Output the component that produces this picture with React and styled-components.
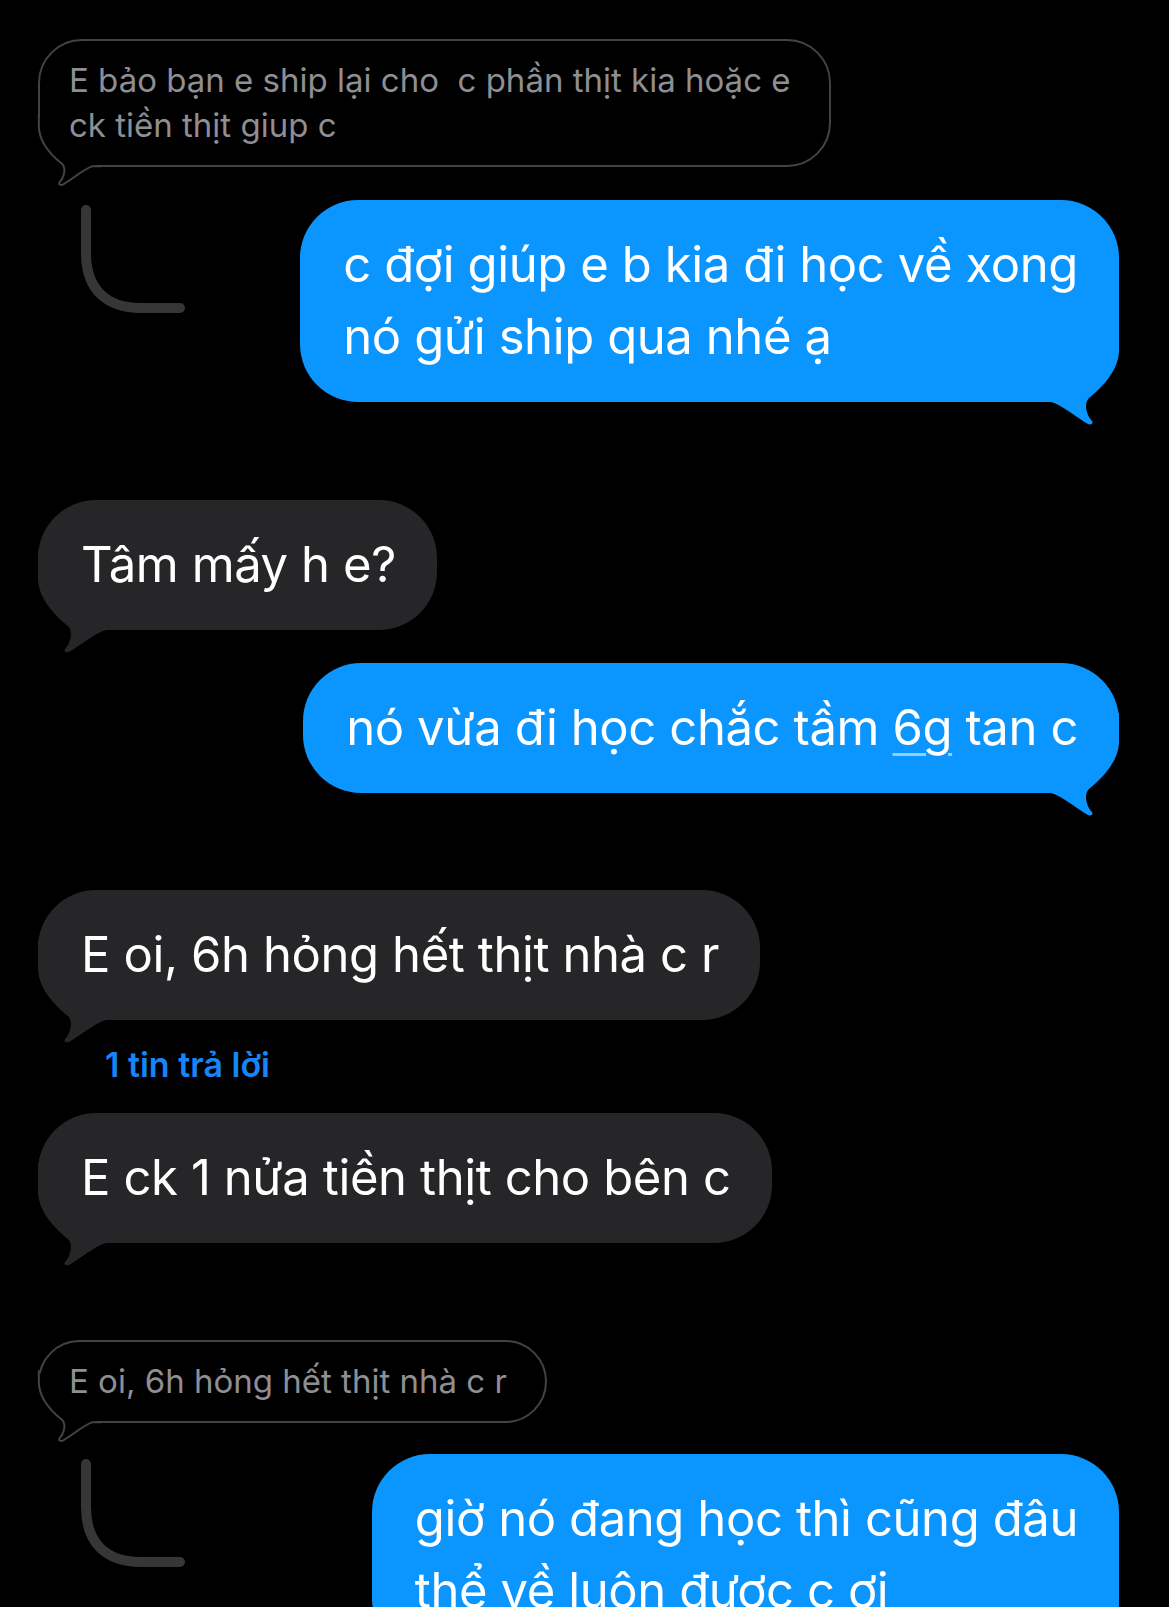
import React from 'react';
import styled, { createGlobalStyle } from 'styled-components';

const Global = createGlobalStyle`
  html, body { margin: 0; padding: 0; background: #000; overflow: hidden; }
  body { font-family: Inter, "Noto Sans", sans-serif; -webkit-font-smoothing: antialiased; }
`;

const Thread = styled.main`
  width: 1169px;
  box-sizing: border-box;
  padding: 39px 50px 0 38px;
  display: flex;
  flex-direction: column;
`;

const Bubble = styled.div`
  position: relative;
  box-sizing: border-box;
  margin-top: ${p => p.$gap || 0}px;
  padding: 29px 41px 29px 43px;
  border-radius: 58px;
  background: ${p => (p.$tone === 'blue' ? '#0b95fe' : '#262628')};
  color: #fff;
  font-size: 49px;
  letter-spacing: -0.4px;
  line-height: 72px;
  white-space: pre;
  align-self: ${p => (p.$side === 'right' ? 'flex-end' : 'flex-start')};
`;

const QuoteBubble = styled.div`
  position: relative;
  box-sizing: border-box;
  margin-top: ${p => p.$gap || 0}px;
  align-self: flex-start;
  border: 2px solid #434345;
  border-radius: 44px;
  padding: 17px 38px 17px 29px;
  color: #8e8e93;
  font-size: 33px;
  line-height: 45px;
  white-space: pre;
`;

const Line = styled.div`
  position: relative;
  z-index: 1;
`;

const Detected = styled.span`
  text-decoration: underline;
  text-decoration-color: #8fd0ff;
  text-decoration-thickness: 3px;
  text-underline-offset: 8px;
`;

const TailSvg = styled.svg`
  position: absolute;
  z-index: 0;
  overflow: visible;
  width: ${p => 100 * p.$scale}px;
  height: ${p => 104 * p.$scale}px;
  bottom: ${p => -24 * p.$scale - p.$inset}px;
  ${p => (p.$side === 'left'
    ? `left: ${-p.$inset}px; transform: scaleX(-1);`
    : `right: ${-p.$inset}px;`)}
`;

const TAIL_FILL =
  'M0 0 L100 0 L100 28 C100 50 80 68 70 76 C64 82 68 94 73 99 C75 102 71 103 69 102 C58 96 45 84 32 80 L0 80 Z';
const TAIL_MASK = 'M28 70 L96 18 L108 18 L108 110 L28 110 Z';
const TAIL_OUTLINE =
  'M99 14 L99 28 C99 50 80 68 70 76 C64 82 68 94 73 99 C75 102 71 103 69 102 C58 96 45 84 32 79 L20 79';

function Tail({ side, color, outline, scale = 1, inset = 0 }) {
  return (
    <TailSvg viewBox="0 0 100 104" $side={side} $scale={scale} $inset={inset} aria-hidden="true">
      {outline ? (
        <>
          <path d={TAIL_MASK} fill="#000" />
          <path d={TAIL_OUTLINE} fill="none" stroke={outline} strokeWidth={2 / scale} strokeLinejoin="round" />
        </>
      ) : (
        <path d={TAIL_FILL} fill={color} />
      )}
    </TailSvg>
  );
}

const ReplyRow = styled.div`
  margin-top: ${p => p.$gap || 0}px;
  display: flex;
  justify-content: space-between;
  align-items: flex-start;
`;

const ConnectorSvg = styled.svg`
  width: 110px;
  height: 112px;
  margin: 5px 0 0 43px;
  flex: none;
`;

function Connector() {
  return (
    <ConnectorSvg viewBox="0 0 110 112" aria-hidden="true">
      <path d="M5 5 V48 C5 84 25 103 60 103 H99" fill="none" stroke="#363638" strokeWidth="10" strokeLinecap="round" />
    </ConnectorSvg>
  );
}

const ReplyCount = styled.div`
  margin: ${p => p.$gap || 0}px 0 0 67px;
  font-size: 34px;
  line-height: 36px;
  font-weight: 600;
  color: #1685f8;
`;

function Message({ tone, side, gap, lines }) {
  return (
    <Bubble $tone={tone} $side={side} $gap={gap}>
      {lines.map((l, i) => <Line key={i}>{l}</Line>)}
      <Tail side={side} color={tone === 'blue' ? '#0b95fe' : '#262628'} />
    </Bubble>
  );
}

function Quote({ gap, lines }) {
  return (
    <QuoteBubble $gap={gap}>
      {lines.map((l, i) => <Line key={i}>{l}</Line>)}
      <Tail side="left" outline="#434345" scale={0.8} inset={2} />
    </QuoteBubble>
  );
}

export default function App() {
  return (
    <>
      <Global />
      <Thread>
        <Quote lines={['E bảo bạn e ship lại cho  c phần thịt kia hoặc e', 'ck tiền thịt giup c']} />
        <ReplyRow $gap={33}>
          <Connector />
          <Message tone="blue" side="right" lines={['c đợi giúp e b kia đi học về xong', 'nó gửi ship qua nhé ạ']} />
        </ReplyRow>
        <Message tone="gray" side="left" gap={98} lines={['Tâm mấy h e?']} />
        <Message
          tone="blue"
          side="right"
          gap={33}
          lines={[<>nó vừa đi học chắc tầm <Detected>6g</Detected> tan c</>]}
        />
        <Message tone="gray" side="left" gap={97} lines={['E oi, 6h hỏng hết thịt nhà c r']} />
        <ReplyCount $gap={27}>1 tin trả lời</ReplyCount>
        <Message tone="gray" side="left" gap={30} lines={['E ck 1 nửa tiền thịt cho bên c']} />
        <Quote gap={97} lines={['E oi, 6h hỏng hết thịt nhà c r']} />
        <ReplyRow $gap={31}>
          <Connector />
          <Message tone="blue" side="right" lines={['giờ nó đang học thì cũng đâu', 'thể về luôn được c ơi']} />
        </ReplyRow>
      </Thread>
    </>
  );
}
